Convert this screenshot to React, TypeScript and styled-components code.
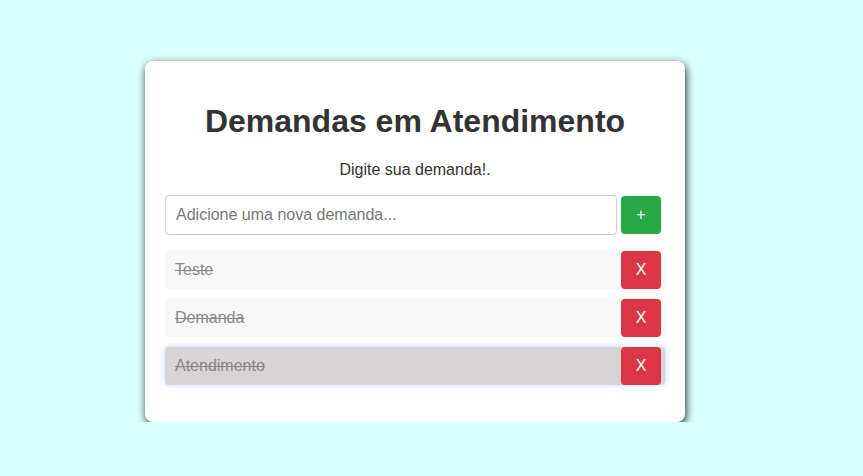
import React, { useState } from "react";
import styled, { createGlobalStyle } from "styled-components";

const GlobalStyle = createGlobalStyle`
  html, body {
    margin: 0;
    padding: 0;
    background: #dcffff;
    font-family: "Liberation Sans", Arial, sans-serif;
  }
`;

const Page = styled.div`
  padding: 61px 0 0 145px;
`;

const Card = styled.div`
  width: 540px;
  box-sizing: border-box;
  padding: 21px 20px 20px;
  background: #fff;
  border-radius: 8px;
  box-shadow: 1px 3px 9px rgba(0, 0, 0, 0.85);
`;

const Title = styled.h1`
  margin: 21px 0;
  font-size: 32px;
  font-weight: bold;
  color: #333;
  text-align: center;
`;

const Subtitle = styled.p`
  margin: 16px 0;
  font-size: 16px;
  color: #333;
  text-align: center;
`;

const Form = styled.form`
  display: flex;
  align-items: center;
  gap: 4px;
  margin-right: 4px;
`;

const Input = styled.input`
  flex: 1;
  height: 40px;
  box-sizing: border-box;
  padding: 10px;
  font-size: 16px;
  font-family: inherit;
  color: #333;
  border: 1px solid #ccc;
  border-radius: 4px;
  outline: none;
  &::placeholder {
    color: #777;
  }
`;

const Button = styled.button<{ $variant: "add" | "remove" }>`
  width: 40px;
  height: 38px;
  flex: none;
  border: none;
  border-radius: 4px;
  color: #fff;
  font-family: inherit;
  font-size: 16px;
  background: ${({ $variant }) => ($variant === "add" ? "#28a745" : "#dc3545")};
  cursor: pointer;
`;

const List = styled.ul`
  list-style: none;
  margin: 16px 0 17px;
  padding: 0;
`;

const Item = styled.li<{ $active?: boolean }>`
  display: flex;
  align-items: center;
  justify-content: space-between;
  height: 38px;
  margin-bottom: 10px;
  padding: 0 4px 0 10px;
  border-radius: 4px;
  background: ${({ $active }) => ($active ? "#d6d4d5" : "#f8f8f8")};
  box-shadow: ${({ $active }) =>
    $active ? "0 0 6px rgba(0, 110, 255, 0.25)" : "none"};
`;

const ItemText = styled.span<{ $done: boolean }>`
  font-size: 16px;
  color: #888;
  text-decoration: ${({ $done }) => ($done ? "line-through" : "none")};
`;

export default function App() {
  const [items, setItems] = useState([
    { text: "Teste", done: true },
    { text: "Demanda", done: true },
    { text: "Atendimento", done: true },
  ]);
  const [value, setValue] = useState("");

  return (
    <>
      <GlobalStyle />
      <Page>
        <Card>
          <Title>Demandas em Atendimento</Title>
          <Subtitle>Digite sua demanda!.</Subtitle>
          <Form
            onSubmit={(e) => {
              e.preventDefault();
              if (!value.trim()) return;
              setItems([...items, { text: value, done: false }]);
              setValue("");
            }}
          >
            <Input
              placeholder="Adicione uma nova demanda..."
              value={value}
              onChange={(e) => setValue(e.target.value)}
            />
            <Button $variant="add" type="submit">
              +
            </Button>
          </Form>
          <List>
            {items.map((item, i) => (
              <Item key={i} $active={i === 2}>
                <ItemText $done={item.done}>{item.text}</ItemText>
                <Button
                  $variant="remove"
                  type="button"
                  onClick={() => setItems(items.filter((_, j) => j !== i))}
                >
                  X
                </Button>
              </Item>
            ))}
          </List>
        </Card>
      </Page>
    </>
  );
}
